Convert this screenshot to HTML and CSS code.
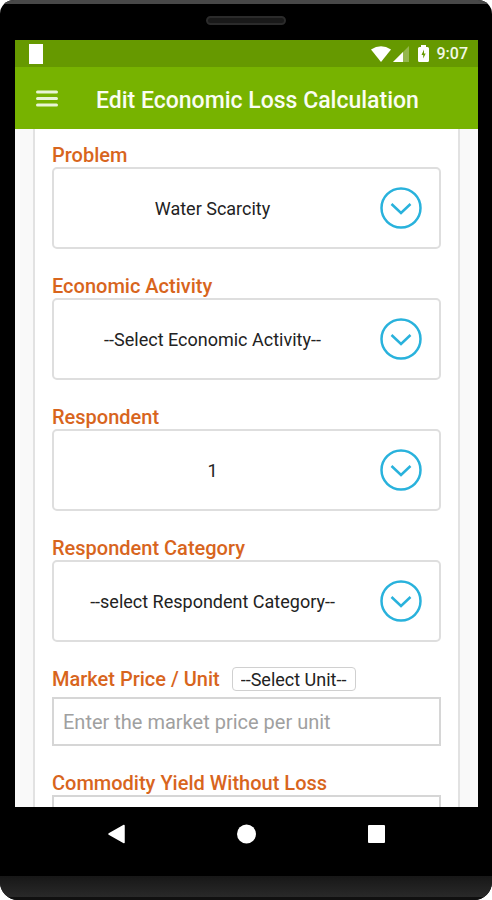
FILE: index.html
```html
<!DOCTYPE html>
<html lang="en">
<head>
<meta charset="utf-8">
<meta name="viewport" content="width=device-width, initial-scale=1">
<title>Edit Economic Loss Calculation</title>
<link rel="stylesheet" href="styles.css">
</head>
<body>
<div class="phone">
  <div class="bezel-top"><span class="speaker"></span></div>
  <div class="screen">
    <div class="status-bar">
      <span class="notification"></span>
      <div class="status-icons">
        <svg class="wifi" width="20" height="16" viewBox="0 0 20 16" aria-hidden="true"><path d="M0 3.5Q10-3 20 3.500L10 16Z" fill="#fff"/></svg>
        <svg class="signal" width="16" height="16" viewBox="0 0 16 16" aria-hidden="true"><path d="M16 0V16H0Z" fill="#fff" opacity=".3"/><path d="M10 6V16H0Z" fill="#fff"/></svg>
        <svg class="battery" width="11" height="17" viewBox="0 0 11 17" aria-hidden="true"><path d="M3 0H8V2H9.500Q11 2 11 3.500V15.500Q11 17 9.500 17H1.500Q0 17 0 15.500V3.500Q0 2 1.500 2H3Z" fill="#fff"/><path d="M6 4.500L3.500 10H5.200V13.500L7.700 8.500H6Z" fill="#669900"/></svg>
        <span class="clock">9:07</span>
      </div>
    </div>
    <header class="app-bar">
      <button class="menu" type="button" aria-label="Menu">
        <svg width="22" height="17" viewBox="0 0 22 17" aria-hidden="true"><path d="M1.500 2H20.500M1.500 8.500H20.500M1.500 15H20.500" stroke="#e9f5d5" stroke-width="3" stroke-linecap="round"/></svg>
      </button>
      <h1>Edit Economic Loss Calculation</h1>
    </header>
    <main class="content">
      <form class="card">
        <div class="field">
          <label for="problem">Problem</label>
          <div class="picker">
            <select id="problem"><option>Water Scarcity</option></select>
            <svg class="chevron" viewBox="0 0 42 42" aria-hidden="true"><circle cx="21" cy="21" r="19.500"/><path d="M11.500 17L21 26L30.500 17"/></svg>
          </div>
        </div>
        <div class="field">
          <label for="activity">Economic Activity</label>
          <div class="picker">
            <select id="activity"><option>--Select Economic Activity--</option></select>
            <svg class="chevron" viewBox="0 0 42 42" aria-hidden="true"><circle cx="21" cy="21" r="19.500"/><path d="M11.500 17L21 26L30.500 17"/></svg>
          </div>
        </div>
        <div class="field">
          <label for="respondent">Respondent</label>
          <div class="picker">
            <select id="respondent"><option>1</option></select>
            <svg class="chevron" viewBox="0 0 42 42" aria-hidden="true"><circle cx="21" cy="21" r="19.500"/><path d="M11.500 17L21 26L30.500 17"/></svg>
          </div>
        </div>
        <div class="field">
          <label for="category">Respondent Category</label>
          <div class="picker">
            <select id="category"><option>--select Respondent Category--</option></select>
            <svg class="chevron" viewBox="0 0 42 42" aria-hidden="true"><circle cx="21" cy="21" r="19.500"/><path d="M11.500 17L21 26L30.500 17"/></svg>
          </div>
        </div>
        <div class="field">
          <div class="price-head">
            <label for="price">Market Price / Unit</label>
            <select class="unit" aria-label="Unit"><option>--Select Unit--</option></select>
          </div>
          <input id="price" type="text" placeholder="Enter the market price per unit">
        </div>
        <div class="field">
          <label for="yield">Commodity Yield Without Loss</label>
          <input id="yield" type="text">
        </div>
      </form>
    </main>
  </div>
  <nav class="nav-bar" aria-label="System">
    <button type="button" aria-label="Back"><svg width="20" height="20" viewBox="0 0 20 20" aria-hidden="true"><path d="M18 1.500V18.500L3 10Z" fill="#fff" stroke="#fff" stroke-width="1.500" stroke-linejoin="round"/></svg></button>
    <button type="button" aria-label="Home"><svg width="20" height="20" viewBox="0 0 20 20" aria-hidden="true"><circle cx="10.500" cy="10" r="9.500" fill="#fff"/></svg></button>
    <button type="button" aria-label="Recent apps"><svg width="20" height="20" viewBox="0 0 20 20" aria-hidden="true"><rect x="2" y="1" width="17" height="18" rx="1" fill="#fff"/></svg></button>
  </nav>
  <div class="bezel-bottom"></div>
</div>
</body>
</html>
```
FILE: styles.css
```css
* {
  box-sizing: border-box;
}

body {
  margin: 0;
  background: #fff;
  color: #222;
  font-family: Roboto, "Liberation Sans", sans-serif;
}

button {
  display: flex;
  padding: 0;
  border: 0;
  background: none;
}

.phone {
  display: flex;
  flex-direction: column;
  height: 100vh;
  overflow: hidden;
  border-radius: 14px 14px 18px 18px;
  background: #000;
}

.bezel-top {
  display: flex;
  flex: none;
  justify-content: center;
  height: 40px;
  padding-top: 12px;
  border-top: 4px solid #484848;
}

.speaker {
  width: 80px;
  height: 9px;
  border: 2px solid #2b2b2b;
  border-radius: 5px;
  background: #191919;
}

.screen {
  display: flex;
  flex: 1;
  flex-direction: column;
  min-height: 0;
  margin: 0 14px 0 15px;
  background: #f9f9f9;
}

.status-bar {
  display: flex;
  flex: none;
  align-items: center;
  justify-content: space-between;
  height: 27px;
  padding: 0 10px 0 14px;
  background: #669900;
}

.notification {
  width: 14px;
  height: 20px;
  background: #fff;
}

.status-icons {
  display: flex;
  align-items: center;
}

.signal {
  margin: 0 9px 0 2px;
}

.clock {
  margin-left: 8px;
  color: #f2f8e6;
  font-size: 16px;
  font-weight: 500;
}

.app-bar {
  display: flex;
  flex: none;
  align-items: center;
  gap: 38px;
  height: 62px;
  padding: 0 21px;
  background: #77b300;
}

h1 {
  margin: 0;
  padding-top: 5px;
  color: #fafdf2;
  font-size: 23px;
  font-weight: 500;
  line-height: 28px;
  white-space: nowrap;
}

.content {
  flex: 1;
  min-height: 0;
  padding: 0 18px;
  overflow: hidden;
}

.card {
  display: flex;
  flex-direction: column;
  gap: 25px;
  padding: 14px 17px;
  border: 1px solid #e2e2e2;
  border-width: 0 2px;
  background: #fff;
}

.field {
  display: flex;
  flex-direction: column;
}

label {
  color: #d8651d;
  font-size: 20px;
  font-weight: 500;
  line-height: 24px;
}

select,
input {
  width: 100%;
  margin: 0;
  border: 2px solid #dedede;
  background: #fff;
  color: #222;
  font-family: inherit;
}

select {
  appearance: none;
}

.picker {
  position: relative;
}

.picker select {
  display: block;
  height: 82px;
  padding: 0 68px 0 0;
  border-radius: 5px;
  font-size: 18px;
  text-align: center;
  text-align-last: center;
}

.chevron {
  position: absolute;
  top: 20px;
  right: 19px;
  width: 42px;
  height: 42px;
  fill: none;
  stroke: #29b2dc;
  stroke-width: 2.5;
  pointer-events: none;
}

.price-head {
  display: flex;
  align-items: center;
  gap: 12px;
  margin-bottom: 6px;
}

.unit {
  width: auto;
  height: 24px;
  padding: 0 8px;
  border-width: 1px;
  border-color: #d0d0d0;
  border-radius: 4px;
  font-size: 18px;
}

input {
  height: 49px;
  padding: 0 9px;
  border-color: #d6d6d6;
  border-radius: 0;
  font-size: 20px;
}

input::placeholder {
  color: #a0a0a0;
}

.nav-bar {
  display: flex;
  flex: none;
  justify-content: center;
  gap: 110px;
  height: 69px;
  padding-top: 17px;
}

.nav-bar button {
  height: 20px;
}

.bezel-bottom {
  flex: none;
  height: 24px;
  border-bottom: 3px solid #101010;
  background: linear-gradient(#171717, #292929);
}
```
